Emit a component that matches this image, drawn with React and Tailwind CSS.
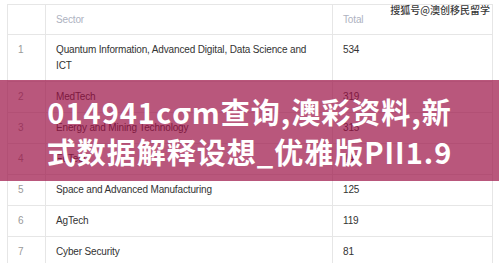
const rows = [
  { n: 1, sector: 'Quantum Information, Advanced Digital, Data Science and ICT', total: 534 },
  { n: 2, sector: 'MedTech', total: 319 },
  { n: 3, sector: 'Energy and Mining Technology', total: 315 },
  { n: 4, sector: 'EdTech', total: 147 },
  { n: 5, sector: 'Space and Advanced Manufacturing', total: 125 },
  { n: 6, sector: 'AgTech', total: 119 },
  { n: 7, sector: 'Cyber Security', total: 81 },
];

export default function App() {
  return (
    <div className="relative w-[499px] h-[263px] bg-white overflow-hidden font-['Liberation_Sans',Arial,sans-serif]">
      <div className="pt-[4px] pl-[7px]">
        <table className="w-[486px] border-collapse text-[10px] leading-[16px] tracking-[-0.15px] text-[#333]">
          <thead>
            <tr className="h-[30px]">
              <th className="w-[38px] border border-[#e6e6e6]"></th>
              <th className="w-[287px] border border-[#e6e6e6] px-[10px] text-left font-normal text-[#aeb2bf]">Sector</th>
              <th className="border border-[#e6e6e6] px-[10px] text-left font-normal text-[#aeb2bf]">Total</th>
            </tr>
          </thead>
          <tbody>
            {rows.map(r => (
              <tr key={r.n}>
                <td className="border border-[#e6e6e6] pl-[10px] py-[7px] align-top text-[#999]">{r.n}</td>
                <td className={`border border-[#e6e6e6] px-[10px] py-[7px] align-top ${r.n === 1 ? 'pr-[20px]' : ''}`}>{r.sector}</td>
                <td className="border border-[#e6e6e6] px-[10px] py-[7px] align-top">{r.total}</td>
              </tr>
            ))}
          </tbody>
        </table>
      </div>

      {/* watermark */}
      <div className="absolute top-[3px] right-[9px] text-[10px] leading-[14px] font-medium text-[#3a3a3a] font-['Noto_Sans_CJK_SC',sans-serif] [text-shadow:0_0_2px_#fff,0_0_1px_#fff]">
        搜狐号@澳创移民留学
      </div>

      {/* title band */}
      <div className="absolute left-0 right-0 top-[80px] h-[101px] bg-[rgba(155,15,68,0.7)] flex flex-col items-center justify-center text-white font-bold text-[29px] leading-[40px] tracking-[1px] whitespace-nowrap font-['Noto_Sans_CJK_SC','Noto_Sans',sans-serif]">
        <div>014941cσm查询,澳彩资料,新</div>
        <div>式数据解释设想_优雅版PII1.9</div>
      </div>
    </div>
  );
}
